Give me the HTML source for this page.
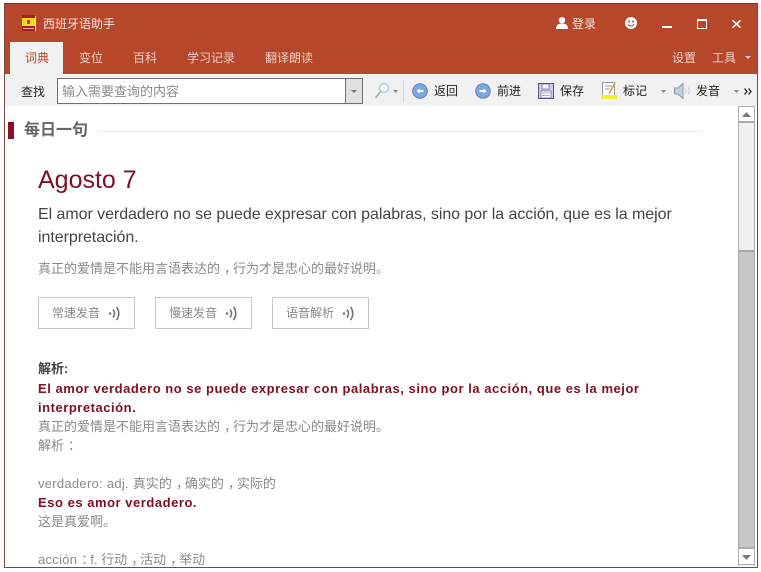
<!DOCTYPE html>
<html><head><meta charset="utf-8"><style>
html,body{margin:0;padding:0;background:#fff}
#w{position:relative;width:761px;height:572px;overflow:hidden;background:#fff;font-family:"Liberation Sans","Noto Sans CJK SC",sans-serif}
#w div,#w svg{position:absolute}
.t{white-space:nowrap;line-height:18px;height:18px}
.tab{font-size:12px;color:#f3cfc3;top:49px}
.g{font-size:13px;color:#8a8a8a}
.s{font-size:12px;color:#8a8a8a}
.b{font-size:13px;font-weight:bold;color:#7f0f24;letter-spacing:.53px}
.btn{top:297px;height:30px;border:1px solid #c8c8c8;background:#fff}
.p{position:relative;left:4px}
.l{letter-spacing:.28px}
</style></head><body><div id="w">
<div style="left:4px;top:3px;width:752px;height:563px;background:#fff;border:1px solid #7a4a3c"></div>
<div style="left:5px;top:4px;width:752px;height:70px;background:#b7472a"></div>
<div style="left:4px;top:3px;width:754px;height:1px;background:#7d3320"></div>
<div style="left:5px;top:74px;width:752px;height:32px;background:#f1f1f1"></div>
<div style="left:10px;top:42px;width:53px;height:32px;background:#f1f1f1"></div>

<svg style="left:21px;top:14px" width="16" height="18" viewBox="0 0 16 18"><rect x="1" y="1" width="13" height="16" fill="#a81c1c"/><rect x="1" y="4" width="13" height="8" fill="#f5d820"/><rect x="6" y="6" width="3" height="4" fill="#b5452a"/><rect x="2" y="14" width="11" height="1" fill="#e8b0a0"/><rect x="14" y="2" width="1" height="15" fill="#eee"/></svg>
<div class="t" style="left:43px;top:15px;font-size:12px;color:#f8e6df">西班牙语助手</div>

<svg style="left:556px;top:17px" width="12" height="12" viewBox="0 0 12 12"><circle cx="6" cy="3.200" r="3.200" fill="#fff"/><path d="M0 12 C0 8 2.500 6.500 6 6.500 C9.500 6.500 12 8 12 12 Z" fill="#fff"/></svg>
<div class="t" style="left:572px;top:15px;font-size:12px;color:#f8e6df">登录</div>
<svg style="left:625px;top:17px" width="12" height="12" viewBox="0 0 12 12"><circle cx="6" cy="6" r="6" fill="#fff"/><circle cx="4" cy="4.500" r="1" fill="#b7472a"/><circle cx="8" cy="4.500" r="1" fill="#b7472a"/><path d="M3 7.200 C4 9.600 8 9.600 9 7.200" fill="none" stroke="#b7472a" stroke-width="1.100"/></svg>
<div style="left:662px;top:26px;width:10px;height:2px;background:#fff"></div>
<div style="left:697px;top:19px;width:8px;height:7px;border:1px solid #fff;border-top-width:2px"></div>
<svg style="left:732px;top:20px" width="9" height="8" viewBox="0 0 9 8"><path d="M.5 .3 L8.500 7.700 M8.500 .3 L.5 7.700" stroke="#fff" stroke-width="1.500"/></svg>

<div class="t tab" style="left:25px;color:#b7472a">词典</div>
<div class="t tab" style="left:79px">变位</div>
<div class="t tab" style="left:133px">百科</div>
<div class="t tab" style="left:187px">学习记录</div>
<div class="t tab" style="left:265px">翻译朗读</div>
<div class="t tab" style="left:672px">设置</div>
<div class="t tab" style="left:712px">工具</div>
<svg style="left:745px;top:56px" width="6" height="4"><path d="M0 0H6L3 3Z" fill="#f3cfc3"/></svg>

<div class="t" style="left:21px;top:83px;font-size:12px;color:#222">查找</div>
<div style="left:57px;top:78px;width:288px;height:24px;border:1px solid #707070;background:#fff"></div>
<div class="t" style="left:62px;top:83px;font-size:13px;color:#8a8a8a">输入需要查询的内容</div>
<div style="left:345px;top:78px;width:16px;height:24px;border:1px solid #707070;background:#e0e0e0"></div>
<svg style="left:351px;top:90px" width="6" height="4"><path d="M0 0H6L3 3Z" fill="#777"/></svg>

<svg style="left:374px;top:82px" width="16" height="18" viewBox="0 0 16 18"><circle cx="10" cy="6" r="4.500" fill="#f7fafc" stroke="#a8c4de" stroke-width="1.200"/><path d="M6.500 9.500 L1.500 16" stroke="#b5b09a" stroke-width="1.800"/></svg>
<svg style="left:393px;top:90px" width="5" height="3"><path d="M0 0H5L2.500 3Z" fill="#888"/></svg>
<div style="left:403px;top:80px;width:1px;height:22px;background:#d8d8d8"></div>

<svg style="left:412px;top:83px" width="16" height="16" viewBox="0 0 16 16"><circle cx="8" cy="8" r="7.300" fill="#7ba7de" stroke="#5a88c2"/><path d="M4.500 8 L7.500 5.500 V7 H11.500 V9 H7.500 V10.500 Z" fill="#fff"/></svg>
<div class="t" style="left:434px;top:82px;font-size:12px;color:#222">返回</div>
<svg style="left:475px;top:83px" width="16" height="16" viewBox="0 0 16 16"><circle cx="8" cy="8" r="7.300" fill="#7ba7de" stroke="#5a88c2"/><path d="M11.500 8 L8.500 5.500 V7 H4.500 V9 H8.500 V10.500 Z" fill="#fff"/></svg>
<div class="t" style="left:497px;top:82px;font-size:12px;color:#222">前进</div>
<svg style="left:538px;top:83px" width="16" height="16" viewBox="0 0 16 16"><rect x="0.500" y="0.500" width="15" height="15" fill="#cfc9ea" stroke="#56517f"/><rect x="4" y="1" width="7" height="5" fill="#f4f4fb" stroke="#56517f" stroke-width=".6"/><rect x="3" y="8" width="10" height="7" fill="#fff" stroke="#56517f" stroke-width=".6"/><path d="M4 10H12M4 12.500H12" stroke="#9a96bd" stroke-width=".7"/></svg>
<div class="t" style="left:560px;top:82px;font-size:12px;color:#222">保存</div>
<svg style="left:601px;top:81px" width="17" height="18" viewBox="0 0 17 18"><rect x="1.500" y="1.500" width="12" height="13" fill="#fff" stroke="#9a9a9a"/><path d="M4 5H11M4 8H9" stroke="#9a9a9a"/><path d="M8 13 L14 2" stroke="#c9a23a" stroke-width="1.500"/><rect x="0" y="14" width="16" height="4" fill="#f5ee30"/></svg>
<div class="t" style="left:623px;top:82px;font-size:12px;color:#222">标记</div>
<svg style="left:661px;top:90px" width="5" height="3"><path d="M0 0H5L2.500 3Z" fill="#888"/></svg>
<svg style="left:673px;top:82px" width="18" height="18" viewBox="0 0 18 18"><path d="M1.500 6H5L10 1.500V16.500L5 12H1.500Z" fill="#c3d0dc" stroke="#8d98a3"/><path d="M12.500 6.500 C13.500 8 13.500 10 12.500 11.500 M15 5 C16.500 7.500 16.500 10.500 15 13" fill="none" stroke="#b9d0e6"/></svg>
<div class="t" style="left:696px;top:82px;font-size:12px;color:#222">发音</div>
<svg style="left:734px;top:90px" width="5" height="3"><path d="M0 0H5L2.500 3Z" fill="#888"/></svg>
<svg style="left:744px;top:88px" width="8" height="7" viewBox="0 0 8 7"><path d="M0.500 0.500 L3 3.500 L0.500 6.500 M4.500 0.500 L7 3.500 L4.500 6.500" fill="none" stroke="#222" stroke-width="1.300"/></svg>

<div style="left:8px;top:122px;width:6px;height:17px;background:#8a0f26"></div>
<div class="t" style="left:24px;top:122px;font-size:16px;font-weight:bold;color:#666">每日一句</div>
<div style="left:98px;top:131px;width:604px;height:1px;background:#e8e8e8"></div>

<div class="t" style="left:38px;top:165px;line-height:30px;height:30px;font-size:25px;color:#7f0f24">Agosto 7</div>
<div class="t" style="left:38px;top:206px;font-size:16px;color:#444;letter-spacing:-.055px">El amor verdadero no se puede expresar con palabras, sino por la acción, que es la mejor</div>
<div class="t" style="left:38px;top:229px;font-size:16px;color:#444;letter-spacing:-.055px">interpretación.</div>
<div class="t g" style="left:38px;top:260px">真正的爱情是不能用言语表达的<span class="p">，</span>行为才是忠心的最好说明。</div>

<div class="btn" style="left:38px;width:95px"></div>
<div class="btn" style="left:155px;width:95px"></div>
<div class="btn" style="left:272px;width:95px"></div>
<div class="t s" style="left:52px;top:304px">常速发音</div>
<div class="t s" style="left:169px;top:304px">慢速发音</div>
<div class="t s" style="left:286px;top:304px">语音解析</div>
<svg style="left:108px;top:306px" width="13" height="15" viewBox="0 0 13 15"><circle cx="2" cy="7.500" r="1.300" fill="#777"/><path d="M5 3.500 C7 6 7 9 5 11.500 M8.500 1 C11.500 5 11.500 10 8.500 14" fill="none" stroke="#777" stroke-width="1.700"/></svg>
<svg style="left:225px;top:306px" width="13" height="15" viewBox="0 0 13 15"><circle cx="2" cy="7.500" r="1.300" fill="#777"/><path d="M5 3.500 C7 6 7 9 5 11.500 M8.500 1 C11.500 5 11.500 10 8.500 14" fill="none" stroke="#777" stroke-width="1.700"/></svg>
<svg style="left:342px;top:306px" width="13" height="15" viewBox="0 0 13 15"><circle cx="2" cy="7.500" r="1.300" fill="#777"/><path d="M5 3.500 C7 6 7 9 5 11.500 M8.500 1 C11.500 5 11.500 10 8.500 14" fill="none" stroke="#777" stroke-width="1.700"/></svg>

<div class="t" style="left:38px;top:360px;font-size:13px;font-weight:bold;color:#444">解析:</div>
<div class="t b" style="left:38px;top:380px">El amor verdadero no se puede expresar con palabras, sino por la acción, que es la mejor</div>
<div class="t b" style="left:38px;top:399px">interpretación.</div>
<div class="t g" style="left:38px;top:418px">真正的爱情是不能用言语表达的<span class="p">，</span>行为才是忠心的最好说明。</div>
<div class="t g" style="left:38px;top:437px">解析<span class="p">：</span></div>
<div class="t g" style="left:38px;top:475px"><span class="l">verdadero: adj. </span>真实的<span class="p">，</span>确实的<span class="p">，</span>实际的</div>
<div class="t b" style="left:38px;top:494px">Eso es amor verdadero.</div>
<div class="t g" style="left:38px;top:513px">这是真爱啊。</div>
<div class="t g" style="left:38px;top:551px"><span class="l">acción</span><span class="p">：</span>f. 行动<span class="p">，</span>活动<span class="p">，</span>举动</div>

<div style="left:5px;top:567px;width:752px;height:5px;background:#fff"></div>
<div style="left:4px;top:567px;width:754px;height:1px;background:#7a4a3c"></div>

<div style="left:738px;top:106px;width:17px;height:460px;background:#f0f0f0;border-left:1px solid #b0b0b0;border-right:1px solid #b0b0b0;box-sizing:border-box"></div>
<div style="left:738px;top:106px;width:17px;height:17px;background:#fff;border:1px solid #b0b0b0;border-bottom:2px solid #aaa;box-sizing:border-box"></div>
<svg style="left:742px;top:112px" width="9" height="5"><path d="M0 5H9L4.500 0Z" fill="#777"/></svg>
<div style="left:738px;top:250px;width:17px;height:298px;background:#c6c6c6;border:1px solid #a8a8a8;border-top-width:2px;box-sizing:border-box"></div>
<div style="left:738px;top:548px;width:17px;height:17px;background:#fff;border:1px solid #b0b0b0;box-sizing:border-box"></div>
<svg style="left:742px;top:555px" width="9" height="5"><path d="M0 0H9L4.500 5Z" fill="#777"/></svg>
</div></body></html>
